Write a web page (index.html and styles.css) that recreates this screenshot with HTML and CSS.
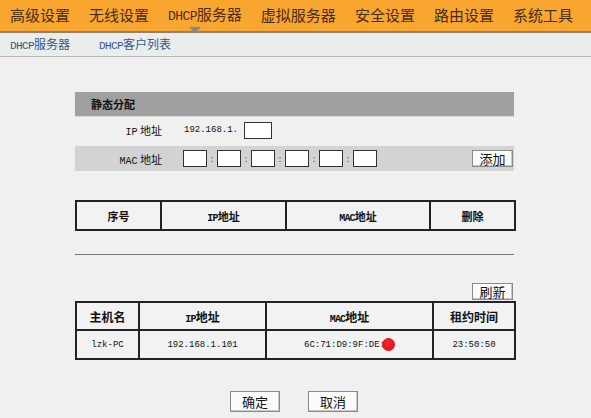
FILE: index.html
```html
<!DOCTYPE html>
<html lang="zh">
<head>
<meta charset="utf-8">
<link rel="stylesheet" href="styles.css">
</head>
<body>
<div class="topnav">
  <span class="nav-item">高级设置</span>
  <span class="nav-item">无线设置</span>
  <span class="nav-item active"><span class="lat">DHCP</span>服务器</span>
  <span class="nav-item">虚拟服务器</span>
  <span class="nav-item">安全设置</span>
  <span class="nav-item">路由设置</span>
  <span class="nav-item">系统工具</span>
</div>
<div class="subnav">
  <span class="sub-item"><span class="lat">DHCP</span>服务器</span>
  <span class="sub-item"><span class="lat">DHCP</span>客户列表</span>
</div>
<div class="content">
  <div class="sec-head">静态分配</div>
  <div class="form-row ip-row">
    <span class="label"><span class="lat">IP</span> 地址</span>
    <span class="mono">192.168.1.</span>
    <input class="box" type="text">
  </div>
  <div class="form-row mac-row">
    <span class="label"><span class="lat">MAC</span> 地址</span>
    <div class="mac-boxes">
      <input class="box" type="text"><span class="colon">:</span>
      <input class="box" type="text"><span class="colon">:</span>
      <input class="box" type="text"><span class="colon">:</span>
      <input class="box" type="text"><span class="colon">:</span>
      <input class="box" type="text"><span class="colon">:</span>
      <input class="box" type="text">
    </div>
    <button class="btn small">添加</button>
  </div>

  <table class="grid t1">
    <tr>
      <th class="c1">序号</th>
      <th class="c2"><span class="lat">IP</span>地址</th>
      <th class="c3"><span class="lat">MAC</span>地址</th>
      <th class="c4">删除</th>
    </tr>
  </table>

  <div class="rule"></div>

  <div class="refresh-row"><button class="btn small">刷新</button></div>

  <table class="grid t2">
    <tr>
      <th class="d1">主机名</th>
      <th class="d2"><span class="lat">IP</span>地址</th>
      <th class="d3"><span class="lat">MAC</span>地址</th>
      <th class="d4">租约时间</th>
    </tr>
    <tr>
      <td class="mono">lzk-PC</td>
      <td class="mono">192.168.1.101</td>
      <td class="mono">6C:71:D9:9F:DE:<span class="dot"></span></td>
      <td class="mono">23:50:50</td>
    </tr>
  </table>

  <div class="actions">
    <button class="btn big">确定</button>
    <button class="btn big">取消</button>
  </div>
</div>
</body>
</html>
```
FILE: styles.css
```css
* { box-sizing: border-box; }
html, body { margin: 0; padding: 0; }
body {
  width: 591px;
  height: 418px;
  overflow: hidden;
  background: #f0f0f0;
  font-family: "Noto Sans CJK SC", sans-serif;
  color: #111;
}
.lat { font-family: "Liberation Mono", "Noto Sans CJK SC", monospace; }
.mono { font-family: "Liberation Mono", "Noto Sans CJK SC", monospace; font-size: 9px; }

.topnav {
  height: 33px;
  background: #f9a630;
  border-bottom: 2px solid #8c8372;
  display: flex;
  align-items: center;
  padding-left: 10px;
  gap: 19px;
  font-size: 15px;
  color: #4a2c12;
  line-height: 1;
}
.nav-item { white-space: nowrap; padding-bottom: 2px; }
.nav-item .lat { font-size: 13px; letter-spacing: -0.6px; }
.nav-item.active { position: relative; }
.nav-item.active::after {
  content: "";
  position: absolute;
  left: 21px;
  top: 21px;
  border-left: 6px solid transparent;
  border-right: 6px solid transparent;
  border-top: 6px solid #858585;
}

.subnav {
  height: 24px;
  background: #ebeded;
  border-bottom: 1px solid #b9b9b9;
  display: flex;
  align-items: center;
  padding-left: 10px;
  gap: 29px;
  font-size: 12px;
  color: #34568a;
  line-height: 1;
}
.sub-item .lat { font-size: 11px; letter-spacing: -0.6px; }

.content {
  margin-left: 75px;
  width: 439px;
  padding-top: 35px;
}
.sec-head {
  height: 25px;
  background: #a0a0a0;
  border-bottom: 1px solid #d8d8d8;
  font-size: 11px;
  font-weight: bold;
  color: #111;
  display: flex;
  align-items: center;
  padding-left: 16px;
}
.form-row {
  display: flex;
  align-items: center;
  font-size: 11px;
}
.ip-row { height: 29px; padding-bottom: 3px; }
.mac-row { height: 25px; background: #d3d3d3; }
.label {
  width: 87px;
  text-align: right;
  margin-right: 22px;
}
.label .lat { font-size: 10px; }
.ip-row .mono { margin-right: 6px; }
.box {
  width: 28px;
  height: 17px;
  border: 1px solid #333;
  background: #fff;
  margin: 0;
  padding: 0;
}
.mac-boxes { display: flex; align-items: center; margin-left: -1px; }
.mac-boxes .box { width: 24px; }
.colon { width: 10px; text-align: center; font-size: 9px; color: #555; }
.btn {
  font-family: "Noto Sans CJK SC", sans-serif;
  background: #fbfbfb;
  border: 1px solid #8a8a8a;
  box-shadow: inset -1px -1px 0 #c8c8c8;
  color: #111;
  padding: 0 0 1px 0;
  line-height: 1;
}
.btn.small { width: 41px; height: 17px; font-size: 13px; }
.mac-row .btn { margin-left: auto; margin-right: 1px; }

.grid {
  width: 439px;
  border-collapse: collapse;
  table-layout: fixed;
  border: 2px solid #222;
}
.grid th, .grid td {
  border: 2px solid #222;
  text-align: center;
  padding: 0;
  font-size: 11px;
  background: #f2f2f2;
}
.grid th { font-weight: bold; }
.grid th .lat { font-size: 10px; font-weight: bold; letter-spacing: -0.8px; }
.t1 { margin-top: 29px; }
.t1 th { height: 29px; }
.c1 { width: 85px; } .c2 { width: 125px; } .c3 { width: 144px; } .c4 { width: 85px; }
.d1 { width: 63px; } .d2 { width: 127px; } .d3 { width: 167px; } .d4 { width: 82px; }
.t2 th { height: 28px; font-size: 12px; }
.t2 td { height: 29px; font-size: 9px; }
.dot {
  display: inline-block;
  width: 13px;
  height: 13px;
  border-radius: 50%;
  background: radial-gradient(circle at 45% 40%, #ff2a2a 0%, #e3141b 60%, #c10d12 100%);
  vertical-align: middle;
  margin-left: -3px;
}

.rule {
  margin-top: 23px;
  height: 1px;
  background: #777;
}
.refresh-row {
  margin-top: 28px;
  display: flex;
  justify-content: flex-end;
  margin-bottom: 1px;
}
.refresh-row .btn { height: 17px; margin-right: 1px; }

.actions {
  margin-top: 31px;
  display: flex;
  gap: 28px;
  padding-left: 155px;
}
.btn.big { width: 50px; height: 21px; font-size: 13px; }
```
